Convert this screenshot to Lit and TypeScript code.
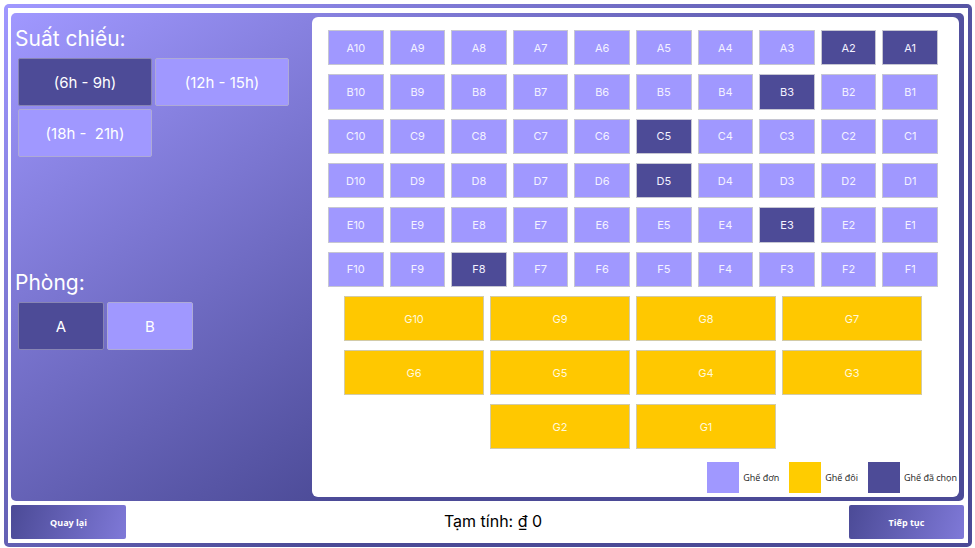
import { LitElement, html, css } from "lit";
import { customElement, property, state } from "lit/decorators.js";
import { classMap } from "lit/directives/class-map.js";

const SHOWTIMES = ["(6h - 9h)", "(12h - 15h)", "(18h -  21h)"];
const ROOMS = ["A", "B"];
const SINGLE_ROWS = ["A", "B", "C", "D", "E", "F"];
const PER_ROW = 10;

@customElement("choice-group")
class ChoiceGroup extends LitElement {
  @property() heading = "";
  @property({ type: Array }) options: string[] = [];
  @property({ type: Boolean }) compact = false;
  @state() private chosen = 0;

  static styles = css`
    :host {
      display: block;
      flex: 1 1 0;
      padding: 11px 4px 0;
    }
    .heading {
      margin: 0;
      font-size: 21px;
      line-height: 30px;
      font-weight: 400;
      color: #fff;
    }
    .options {
      display: flex;
      flex-wrap: wrap;
      gap: 3px;
      padding: 4px 3px;
    }
    .option {
      box-sizing: border-box;
      width: 134px;
      height: 48px;
      padding: 0;
      border: 1px solid #aeaad6;
      border-radius: 2px;
      background: #a098ff;
      color: #fff;
      font: inherit;
      font-size: 15px;
      white-space: pre;
      cursor: pointer;
    }
    .compact {
      width: 86px;
    }
    .chosen {
      background: #4d4b97;
      border-color: #8885b4;
    }
  `;

  render() {
    return html`
      <h2 class="heading">${this.heading}</h2>
      <div class="options" role="group" aria-label=${this.heading}>
        ${this.options.map(
          (label, i) => html`<button
            type="button"
            class=${classMap({ option: true, compact: this.compact, chosen: i === this.chosen })}
            aria-pressed=${i === this.chosen ? "true" : "false"}
            @click=${() => (this.chosen = i)}
          >${label}</button>`
        )}
      </div>
    `;
  }
}

@customElement("seat-map")
class SeatMap extends LitElement {
  @state() private taken = new Set(["A2", "A1", "B3", "C5", "D5", "E3", "F8"]);

  static styles = css`
    :host {
      display: flex;
      flex-direction: column;
      box-sizing: border-box;
      padding: 13px 0 4px;
      border-radius: 6px;
      background: #fff;
    }
    .singles {
      flex: 1;
      display: grid;
      grid-template-columns: repeat(10, 1fr);
      grid-auto-rows: minmax(24px, 1fr);
      gap: 9px 6px;
      padding: 0 21px 0 16px;
    }
    .doubles {
      display: grid;
      grid-template-columns: repeat(4, 1fr);
      grid-auto-rows: 45px;
      gap: 9px 6px;
      padding: 9px 37px 13px 32px;
    }
    .seat {
      min-width: 0;
      padding: 0;
      border: 1px solid #c6c6d2;
      background: #a098ff;
      color: #f4f2ff;
      font: inherit;
      font-size: 11px;
      cursor: pointer;
    }
    .double {
      background: #ffc800;
      border-color: #d2cba8;
      color: #fff8dc;
    }
    .double:nth-child(9) {
      grid-column-start: 2;
    }
    .taken {
      background: #4d4b97;
    }
    .legend {
      display: flex;
      justify-content: flex-end;
      gap: 10px;
      margin: 0;
      padding: 0 2px 0 0;
      list-style: none;
      font-family: "Open Sans", "Noto Sans", sans-serif;
      font-size: 9px;
      color: #222;
    }
    .entry {
      display: flex;
      align-items: center;
      gap: 4px;
    }
    .swatch {
      width: 32px;
      height: 31px;
      background: #a098ff;
    }
    .swatch.pair {
      background: #ffcc00;
    }
    .swatch.picked {
      background: #4d4b97;
    }
  `;

  private toggle(id: string) {
    const next = new Set(this.taken);
    if (!next.delete(id)) next.add(id);
    this.taken = next;
  }

  private seat(id: string, double = false) {
    const taken = this.taken.has(id);
    return html`<button
      type="button"
      class=${classMap({ seat: true, double, taken })}
      aria-pressed=${taken ? "true" : "false"}
      @click=${() => this.toggle(id)}
    >${id}</button>`;
  }

  render() {
    const numbers = Array.from({ length: PER_ROW }, (_, i) => PER_ROW - i);
    return html`
      <div class="singles">
        ${SINGLE_ROWS.map((row) => numbers.map((n) => this.seat(`${row}${n}`)))}
      </div>
      <div class="doubles">${numbers.map((n) => this.seat(`G${n}`, true))}</div>
      <ul class="legend">
        <li class="entry"><span class="swatch"></span>Ghế đơn</li>
        <li class="entry"><span class="swatch pair"></span>Ghế đôi</li>
        <li class="entry"><span class="swatch picked"></span>Ghế đã chọn</li>
      </ul>
    `;
  }
}

@customElement("app-root")
class AppRoot extends LitElement {
  static styles = css`
    :host {
      display: flex;
      box-sizing: border-box;
      min-height: 100vh;
      padding: 4px 3px 1px 4px;
      background: #fff;
      font-family: Inter, "Open Sans", sans-serif;
    }
    .frame {
      flex: 1;
      display: flex;
      padding: 4px;
      border-radius: 5px;
      background: linear-gradient(146deg, #a098ff, #4b4a96 63%);
    }
    .sheet {
      flex: 1;
      display: flex;
      flex-direction: column;
      gap: 4px;
      padding: 5px 4px 4px 3px;
      background: #fff;
    }
    .booking {
      flex: 1;
      display: flex;
      padding-right: 5px;
      border-radius: 5px;
      background: linear-gradient(146deg, #a098ff, #4b4a96 63%);
    }
    .sidebar {
      flex: 0 0 301px;
      display: flex;
      flex-direction: column;
    }
    .map {
      flex: 1;
      margin: 4px 0;
    }
    .footer {
      display: flex;
      align-items: center;
      justify-content: space-between;
    }
    .action {
      width: 115px;
      height: 34px;
      padding: 0;
      border: 0;
      border-radius: 2px;
      background: linear-gradient(107deg, #4b4a96, #7f79d8);
      color: #fff;
      font: 700 9px "Open Sans", "Noto Sans", sans-serif;
      cursor: pointer;
    }
    .total {
      margin: 0;
      padding: 0 0 2px 11px;
      font-size: 16px;
      line-height: 20px;
      color: #000;
    }
  `;

  render() {
    return html`
      <main class="frame">
        <div class="sheet">
          <div class="booking">
            <div class="sidebar">
              <choice-group heading="Suất chiếu:" .options=${SHOWTIMES}></choice-group>
              <choice-group heading="Phòng:" .options=${ROOMS} compact></choice-group>
            </div>
            <seat-map class="map"></seat-map>
          </div>
          <div class="footer">
            <button type="button" class="action">Quay lại</button>
            <p class="total">Tạm tính: ₫ 0</p>
            <button type="button" class="action">Tiếp tục</button>
          </div>
        </div>
      </main>
    `;
  }
}
